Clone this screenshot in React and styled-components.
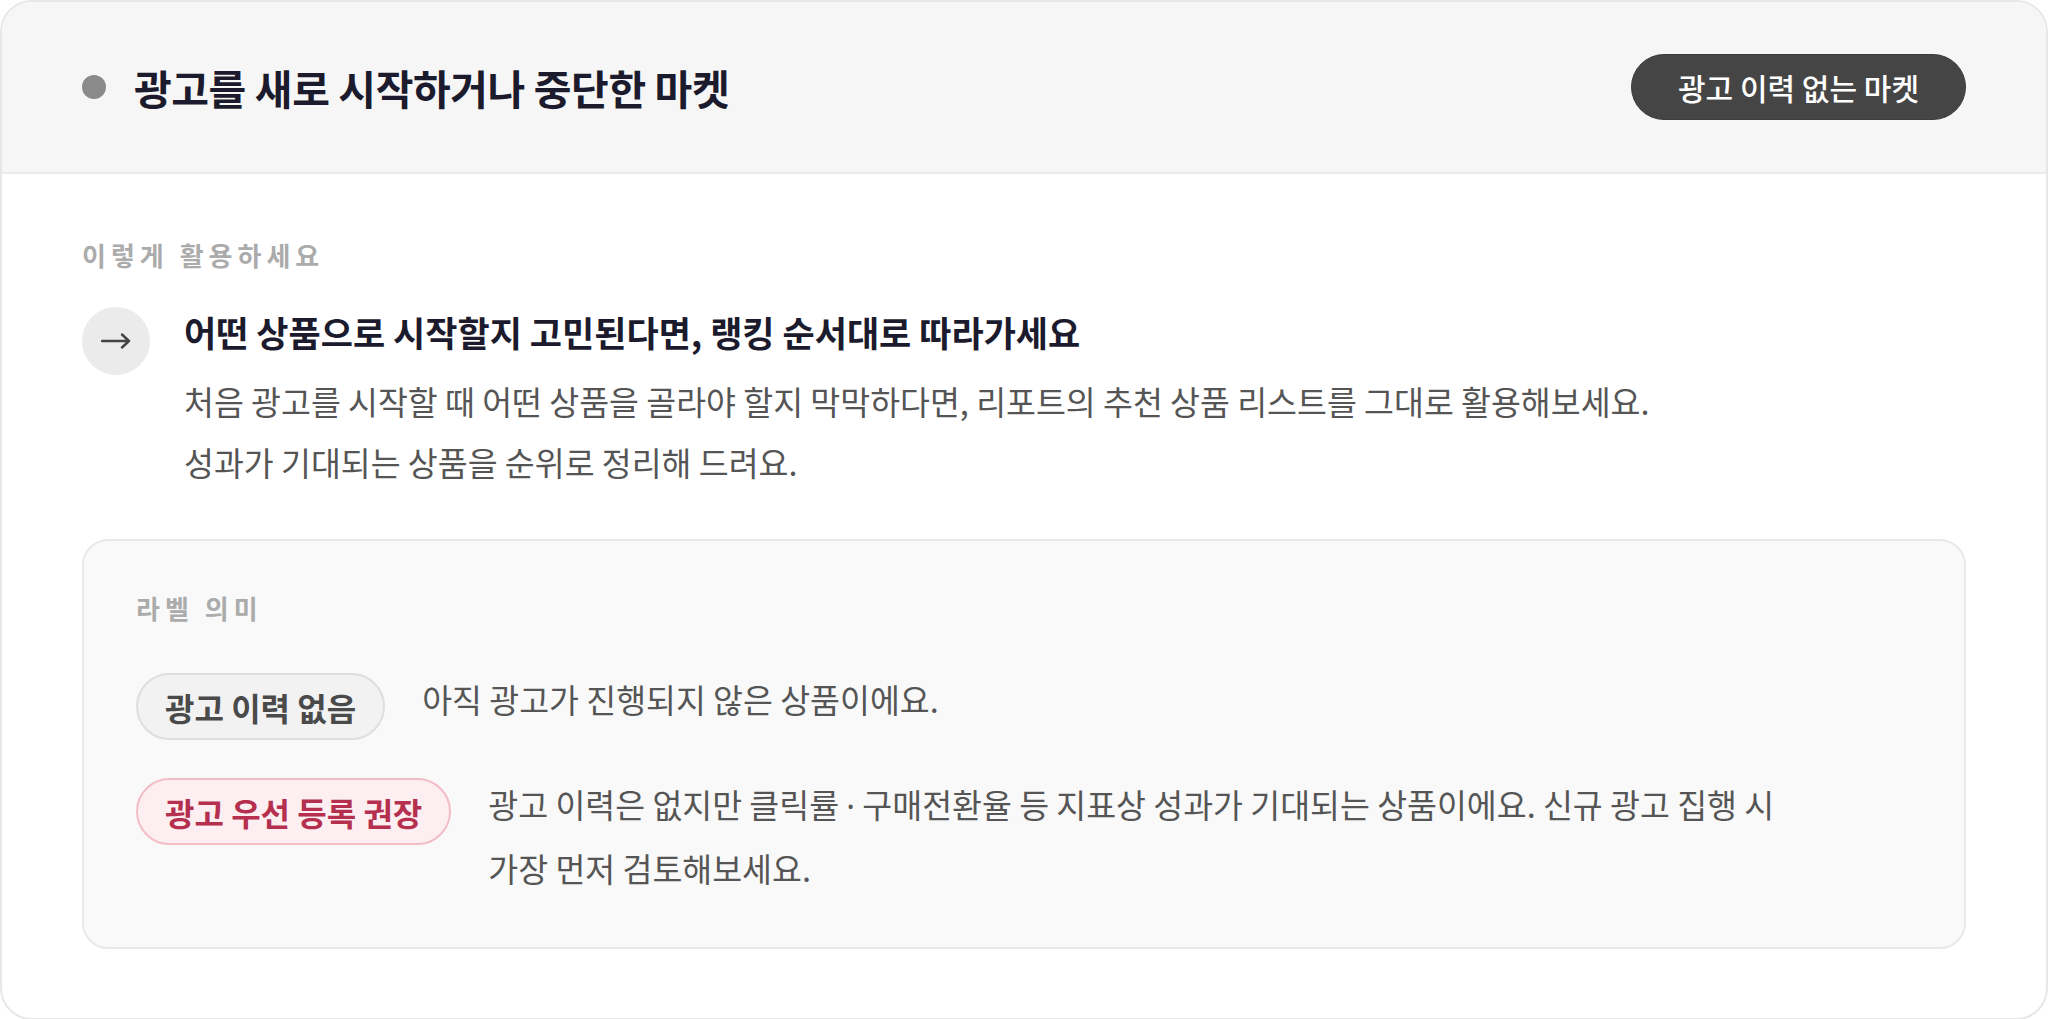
import styled, { createGlobalStyle } from 'styled-components';

const GlobalStyle = createGlobalStyle`
    html, body {
        margin: 0;
        padding: 0;
        background: #ffffff;
    }
    body {
        font-family: "Noto Sans CJK KR", "Noto Sans", sans-serif;
    }
    * {
        box-sizing: border-box;
    }
`

const Card = styled.section`
    background: #ffffff;
    border: 2px solid #e7e7e7;
    border-radius: 32px;
    overflow: hidden;
`

const Header = styled.header`
    display: flex;
    align-items: center;
    justify-content: space-between;
    height: 172px;
    padding: 0 80px;
    background: #f6f6f6;
    border-bottom: 2px solid #ececec;
`

const TitleWrap = styled.div`
    display: flex;
    align-items: center;
    gap: 28px;
`

const Dot = styled.span`
    width: 24px;
    height: 24px;
    border-radius: 50%;
    background: #8a8a8a;
`

const Title = styled.h2`
    margin: 0;
    font-size: 41px;
    line-height: 56px;
    font-weight: 700;
    letter-spacing: -0.01em;
    color: #1c1b2d;
`

const PillButton = styled.button`
    height: 66px;
    padding: 0 46px;
    border: 1px solid #3c3c3c;
    border-radius: 33px;
    background: #454545;
    color: #ffffff;
    font-family: inherit;
    font-size: 30px;
    font-weight: 500;
`

const Body = styled.div`
    padding: 64px 80px 69px;
`

const SectionLabel = styled.div`
    font-size: 26px;
    line-height: 34px;
    font-weight: 700;
    letter-spacing: 5px;
    color: #ababab;
`

const TipRow = styled.div`
    display: flex;
    align-items: flex-start;
    gap: 34px;
    margin-top: 35px;
`

const ArrowCircle = styled.div`
    flex-shrink: 0;
    display: flex;
    align-items: center;
    justify-content: center;
    width: 68px;
    height: 68px;
    border-radius: 50%;
    background: #ebebeb;
`

const TipHeading = styled.h3`
    margin: 0;
    font-size: 35px;
    line-height: 50px;
    font-weight: 700;
    color: #1c1b2d;
`

const TipText = styled.p`
    margin: 13px 0 0;
    font-size: 32.5px;
    line-height: 61px;
    color: #555555;
`

const InfoBox = styled.div`
    margin-top: 47px;
    padding: 50px 52px 48px;
    background: #f9f9f9;
    border: 2px solid #e9e9e9;
    border-radius: 26px;
`

const LegendRow = styled.div`
    display: flex;
    align-items: flex-start;
    gap: 37px;
    margin-top: ${p => p.$first ? '48px' : '38px'};
`

const Badge = styled.span`
    flex-shrink: 0;
    display: inline-flex;
    align-items: center;
    height: 67px;
    padding: 0 27px;
    border-radius: 34px;
    font-size: 32px;
    font-weight: 700;
    white-space: nowrap;
    background: ${p => p.$accent ? '#fdeef1' : '#f2f2f2'};
    border: 2px solid ${p => p.$accent ? '#f3bdc8' : '#dedede'};
    color: ${p => p.$accent ? '#b5304f' : '#4a4a4a'};
`

const Desc = styled.p`
    margin: -5px 0 0;
    max-width: 1320px;
    font-size: 32.5px;
    line-height: 62px;
    color: #555555;
`

const MidDot = styled.span`
    font-family: "Noto Sans", sans-serif;
`

const Arrow = () => (
    <svg width="30" height="18" viewBox="0 0 30 18" fill="none">
        <path d="M1 9H28M21 2.5L28 9L21 15.5" stroke="#444" strokeWidth="2.4" strokeLinecap="round" strokeLinejoin="round"/>
    </svg>
)

const App = () => {
    return (
        <>
            <GlobalStyle/>
            <Card>
                <Header>
                    <TitleWrap>
                        <Dot/>
                        <Title>광고를 새로 시작하거나 중단한 마켓</Title>
                    </TitleWrap>
                    <PillButton>광고 이력 없는 마켓</PillButton>
                </Header>
                <Body>
                    <SectionLabel>이렇게 활용하세요</SectionLabel>
                    <TipRow>
                        <ArrowCircle><Arrow/></ArrowCircle>
                        <div>
                            <TipHeading>어떤 상품으로 시작할지 고민된다면, 랭킹 순서대로 따라가세요</TipHeading>
                            <TipText>
                                처음 광고를 시작할 때 어떤 상품을 골라야 할지 막막하다면, 리포트의 추천 상품 리스트를 그대로 활용해보세요.<br/>
                                성과가 기대되는 상품을 순위로 정리해 드려요.
                            </TipText>
                        </div>
                    </TipRow>
                    <InfoBox>
                        <SectionLabel>라벨 의미</SectionLabel>
                        <LegendRow $first>
                            <Badge>광고 이력 없음</Badge>
                            <Desc>아직 광고가 진행되지 않은 상품이에요.</Desc>
                        </LegendRow>
                        <LegendRow>
                            <Badge $accent>광고 우선 등록 권장</Badge>
                            <Desc>광고 이력은 없지만 클릭률 <MidDot>·</MidDot> 구매전환율 등 지표상 성과가 기대되는 상품이에요. 신규 광고 집행 시 가장 먼저 검토해보세요.</Desc>
                        </LegendRow>
                    </InfoBox>
                </Body>
            </Card>
        </>
    );
}

export default App;
